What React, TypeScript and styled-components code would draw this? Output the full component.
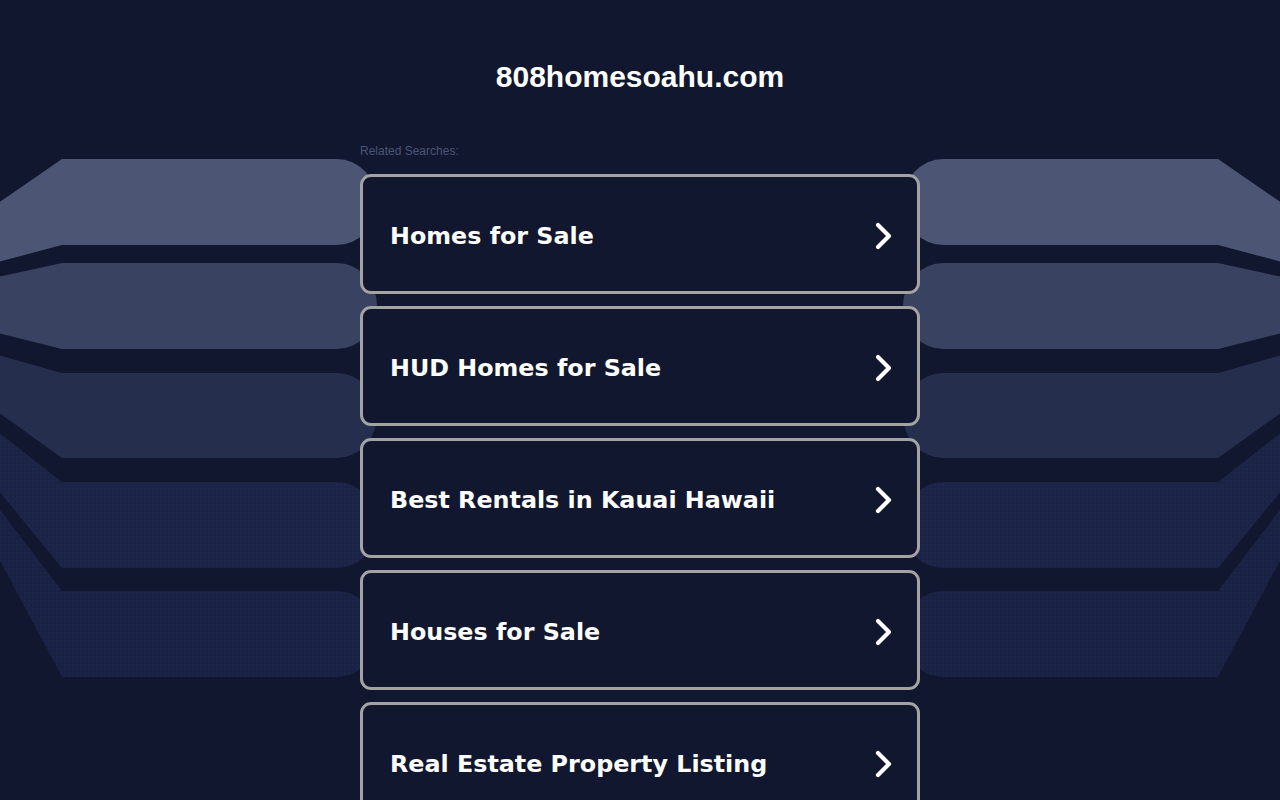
import React from "react";
import styled, { createGlobalStyle } from "styled-components";

const searches = [
  "Homes for Sale",
  "HUD Homes for Sale",
  "Best Rentals in Kauai Hawaii",
  "Houses for Sale",
  "Real Estate Property Listing",
];

// left-hand bands: top/bottom on the flat part, and where the slanted end meets x=0
const bands = [
  { top: 159, bottom: 245, edgeTop: 203, edgeBottom: 262, fill: "#4c5573", dots: false },
  { top: 263, bottom: 349, edgeTop: 277, edgeBottom: 333, fill: "#3a4261", dots: false },
  { top: 373, bottom: 458, edgeTop: 355, edgeBottom: 412, fill: "#262e4d", dots: false },
  { top: 482, bottom: 568, edgeTop: 432, edgeBottom: 490, fill: "#1c2445", dots: true },
  { top: 591, bottom: 677, edgeTop: 507, edgeBottom: 557, fill: "#1a2243", dots: true },
];

const bandPath = (b: (typeof bands)[number]) => {
  const ry = (b.bottom - b.top) / 2;
  return `M-2,${b.edgeTop} L62,${b.top} L337,${b.top} A40,${ry} 0 0 1 337,${b.bottom} L62,${b.bottom} L-2,${b.edgeBottom} Z`;
};

const Backdrop: React.FC = () => (
  <BackdropSvg viewBox="0 0 1280 800" preserveAspectRatio="xMidYMin slice">
    <defs>
      <pattern id="dots" width="4" height="4" patternUnits="userSpaceOnUse">
        <circle cx="1" cy="1" r="0.55" fill="#263160" />
      </pattern>
    </defs>
    {[false, true].map((mirror) => (
      <g key={String(mirror)} transform={mirror ? "translate(1280,0) scale(-1,1)" : undefined}>
        {bands.map((b, i) => (
          <g key={i}>
            <path d={bandPath(b)} fill={b.fill} />
            {b.dots && <path d={bandPath(b)} fill="url(#dots)" />}
          </g>
        ))}
      </g>
    ))}
  </BackdropSvg>
);

const Chevron: React.FC = () => (
  <ChevronSvg viewBox="0 0 20 30">
    <polyline
      points="5,4 16,15 5,26"
      fill="none"
      stroke="#fff"
      strokeWidth="4.2"
      strokeLinecap="round"
      strokeLinejoin="round"
    />
  </ChevronSvg>
);

export default function App() {
  return (
    <>
      <GlobalStyle />
      <Page>
        <Backdrop />
        <Content>
          <Domain>808homesoahu.com</Domain>
          <Results>
            <Label>Related Searches:</Label>
            <List>
              {searches.map((s) => (
                <Card key={s} href="#">
                  <CardTitle>{s}</CardTitle>
                  <Chevron />
                </Card>
              ))}
            </List>
          </Results>
        </Content>
      </Page>
    </>
  );
}

const GlobalStyle = createGlobalStyle`
  html, body {
    margin: 0;
    padding: 0;
    background: #11172e;
  }
  body {
    font-family: "Liberation Sans", Arial, sans-serif;
    overflow: hidden;
  }
`;

const Page = styled.div`
  position: relative;
  min-height: 100vh;
  background: #11172e;
`;

const BackdropSvg = styled.svg`
  position: absolute;
  top: 0;
  left: 0;
  width: 100%;
  height: 800px;
  z-index: 0;
`;

const Content = styled.main`
  position: relative;
  z-index: 1;
  display: flex;
  flex-direction: column;
  align-items: center;
  padding-top: 59px;
`;

const Domain = styled.h1`
  margin: 0;
  font-family: "Liberation Sans", Arial, sans-serif;
  font-size: 30px;
  line-height: 36px;
  font-weight: 700;
  color: #ffffff;
`;

const Results = styled.section`
  width: 560px;
  margin-top: 49px;
`;

const Label = styled.div`
  font-family: "Liberation Sans", Arial, sans-serif;
  font-size: 12px;
  line-height: 14px;
  color: #4a5577;
  margin-bottom: 16px;
`;

const List = styled.div`
  display: flex;
  flex-direction: column;
  gap: 12px;
`;

const Card = styled.a`
  box-sizing: border-box;
  height: 120px;
  display: flex;
  align-items: center;
  justify-content: space-between;
  padding: 4px 24px 0 27px;
  border: 3px solid #a3a3a3;
  border-radius: 11px;
  background: #11172e;
  text-decoration: none;
  cursor: pointer;
`;

const CardTitle = styled.span`
  font-family: "DejaVu Sans", Verdana, sans-serif;
  font-size: 23.8px;
  font-weight: 700;
  color: #ffffff;
`;

const ChevronSvg = styled.svg`
  width: 20px;
  height: 30px;
  flex-shrink: 0;
`;
